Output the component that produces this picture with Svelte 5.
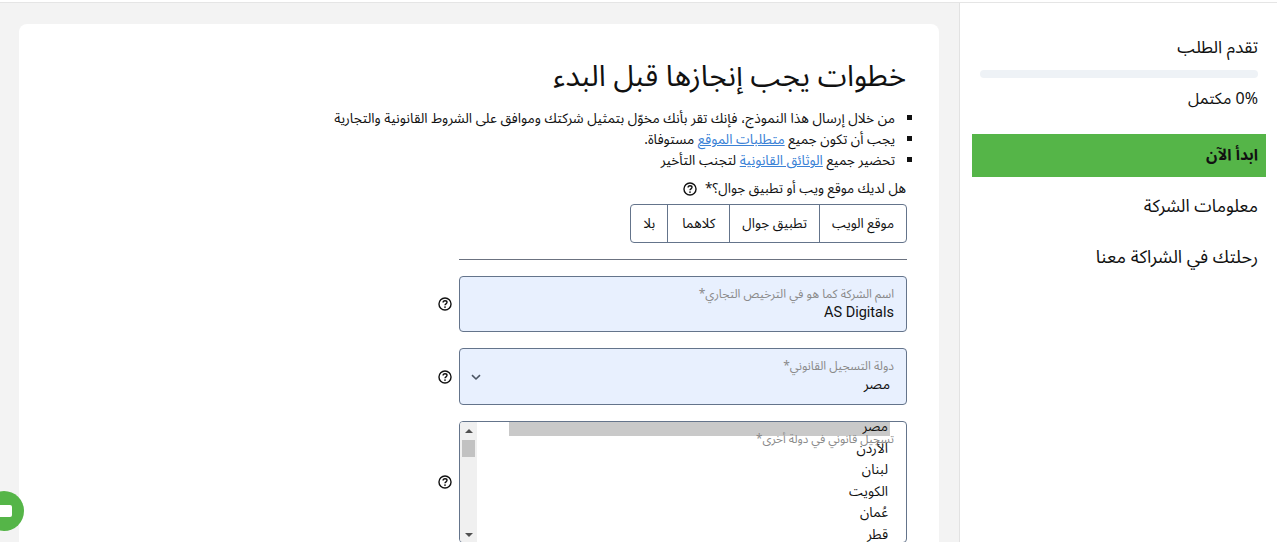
<script>
	const options = ['موقع الويب', 'تطبيق جوال', 'كلاهما', 'بلا'];
	const countries = ['مصر', 'الأردن', 'لبنان', 'الكويت', 'عُمان', 'قطر'];
</script>

{#snippet help()}
	<svg class="help" viewBox="0 0 16 16" width="14" height="14" aria-hidden="true">
		<circle cx="8" cy="8" r="6.9" fill="none" stroke="#111" stroke-width="1.6" />
		<path d="M5.8 6.3c0-1.3 1-2.1 2.3-2.1s2.2.8 2.2 1.9c0 1.7-2.3 1.7-2.3 3.4" fill="none" stroke="#111" stroke-width="1.6" />
		<circle cx="8" cy="11.5" r="1" fill="#111" />
	</svg>
{/snippet}

<div class="page" dir="rtl">
	<div class="topbar"></div>
	<div class="columns">
		<aside class="sidebar">
			<div class="progress">
				<p class="progress-title">تقدم الطلب</p>
				<div class="bar"></div>
				<p class="progress-value">0% مكتمل</p>
			</div>
			<nav class="steps">
				<div class="step active">ابدأ الآن</div>
				<div class="step">معلومات الشركة</div>
				<div class="step">رحلتك في الشراكة معنا</div>
			</nav>
		</aside>

		<main class="main">
			<section class="card">
				<h1>خطوات يجب إنجازها قبل البدء</h1>
				<ul class="notes">
					<li>من خلال إرسال هذا النموذج، فإنك تقر بأنك مخوّل بتمثيل شركتك وموافق على الشروط القانونية والتجارية</li>
					<li>يجب أن تكون جميع <a href="#req">متطلبات الموقع</a> مستوفاة.</li>
					<li>تحضير جميع <a href="#docs">الوثائق القانونية</a> لتجنب التأخير</li>
				</ul>

				<div class="question">
					<span>هل لديك موقع ويب أو تطبيق جوال؟*</span>
					{@render help()}
				</div>
				<div class="choices">
					{#each options as option}
						<button type="button">{option}</button>
					{/each}
				</div>
				<hr />

				<div class="row">
					<div class="field filled">
						<span class="label">اسم الشركة كما هو في الترخيص التجاري*</span>
						<span class="value latin">AS Digitals</span>
					</div>
					{@render help()}
				</div>

				<div class="row">
					<div class="field filled select">
						<span class="label">دولة التسجيل القانوني*</span>
						<span class="value inset">مصر</span>
						<svg class="chevron" viewBox="0 0 12 12" width="12" height="12" aria-hidden="true">
							<path d="M2 4.2 6 8l4-3.8" fill="none" stroke="#4b5563" stroke-width="1.6" />
						</svg>
					</div>
					{@render help()}
				</div>

				<div class="row">
					<div class="listbox">
						<div class="options">
							{#each countries as country, i}
								<div class="option" class:selected={i === 0}>{country}</div>
							{/each}
						</div>
						<span class="label floating">تسجيل قانوني في دولة أخرى*</span>
						<div class="scrollbar">
							<span class="arrow up"></span>
							<span class="thumb"></span>
							<span class="arrow down"></span>
						</div>
					</div>
					{@render help()}
				</div>
			</section>
		</main>
	</div>

	<div class="chat"><span></span></div>
</div>

<style>
	:global(body) {
		margin: 0;
		background: #fff;
	}

	.page {
		position: relative;
		display: flex;
		flex-direction: column;
		height: 542px;
		overflow: hidden;
		font-family: 'Noto Sans', 'Noto Sans Arabic', 'DejaVu Sans', sans-serif;
		color: #111;
	}

	.topbar {
		flex: none;
		box-sizing: border-box;
		height: 3px;
		border-bottom: 1px solid #e5e5e5;
		background: #fff;
	}

	.columns {
		display: flex;
		flex: 1;
		min-height: 0;
	}

	/* Sidebar */
	.sidebar {
		flex: 0 0 318px;
		box-sizing: border-box;
		padding: 32px 11px 0 12px;
		background: #fff;
		border-left: 1px solid #e2e2e2;
	}

	.progress {
		padding: 0 8px;
	}

	.progress-title {
		margin: 0;
		font-size: 17.3px;
		line-height: 24px;
	}

	.bar {
		height: 8px;
		margin-top: 11px;
		border-radius: 4px;
		background: #eef2f6;
	}

	.progress-value {
		margin: 8px 0 0;
		font-size: 16px;
		line-height: 24px;
	}

	.steps {
		margin-top: 24px;
	}

	.step {
		display: flex;
		align-items: center;
		height: 43px;
		padding: 0 8px;
		margin-bottom: 7.5px;
		font-size: 17.6px;
	}

	.step:last-child {
		font-size: 18px;
	}

	.step.active {
		margin-bottom: 8px;
		background: #55b548;
		font-weight: 700;
		font-size: 15.6px;
	}

	/* Main column */
	.main {
		flex: 1;
		box-sizing: border-box;
		padding: 21px 20px 0 19px;
		background: #f3f3f3;
	}

	.card {
		box-sizing: border-box;
		height: 600px;
		padding: 28px 32px 0 0;
		border-radius: 8px;
		background: #fff;
	}

	h1 {
		margin: 0 1px 0 0;
		font-size: 29.4px;
		font-weight: 400;
		line-height: 46px;
	}

	.notes {
		margin: 9px 0 0;
		padding: 0 12px 0 0;
		list-style: square;
		font-size: 13.75px;
		line-height: 21px;
	}

	a {
		color: #3b82d6;
	}

	.question {
		display: flex;
		align-items: center;
		gap: 8px;
		margin: 8px 1px 0 0;
		font-size: 13.5px;
		line-height: 21px;
	}

	.choices {
		display: inline-flex;
		height: 39px;
		margin-top: 5px;
		border: 1px solid #64748b;
		border-radius: 4px;
		box-sizing: border-box;
		vertical-align: top;
	}

	.choices button {
		padding: 0 12px;
		border: 0;
		border-left: 1px solid #64748b;
		background: none;
		font: inherit;
		font-size: 13.5px;
		color: #111;
	}

	.choices button:nth-child(3) {
		padding: 0 14px;
	}

	.choices button:last-child {
		border-left: 0;
	}

	hr {
		width: 448px;
		height: 1px;
		margin: 16px 0;
		border: 0;
		background: #6b7280;
	}

	.row {
		display: flex;
		align-items: center;
		gap: 7px;
		margin-bottom: 16px;
	}

	.field {
		position: relative;
		box-sizing: border-box;
		width: 448px;
		padding: 8px 12px 0;
		border: 1px solid #64748b;
		border-radius: 4px;
	}

	.filled {
		height: 56px;
		background: #e8f0fe;
	}

	.select {
		height: 57px;
	}

	.label {
		display: block;
		font-size: 12px;
		line-height: 17px;
		color: #8a8a8a;
	}

	.value {
		display: block;
		font-size: 14px;
		line-height: 20px;
	}

	.inset {
		padding: 0 4px 0 0;
	}

	.latin {
		direction: ltr;
		text-align: right;
		font-family: Roboto, sans-serif;
		font-size: 14.5px;
		line-height: 21px;
	}

	.chevron {
		position: absolute;
		left: 10px;
		top: 22px;
	}

	.listbox {
		position: relative;
		box-sizing: border-box;
		display: flex;
		width: 448px;
		height: 122px;
		border: 1px solid #64748b;
		border-radius: 4px;
		overflow: hidden;
	}

	.options {
		flex: 1;
		margin-top: -7px;
		font-size: 13.6px;
		line-height: 21.6px;
	}

	.option {
		height: 21.6px;
		padding-right: 18px;
	}

	.option.selected {
		margin: 0 16px 0 32px;
		padding-right: 2px;
		background: linear-gradient(#0000 7px, #c9c9c9 7px, #c9c9c9 21px, #0000 21px);
	}

	.floating {
		position: absolute;
		top: 8px;
		right: 12px;
		font-size: 11.7px;
	}

	.scrollbar {
		position: relative;
		flex: 0 0 17px;
		background: #f0f0f0;
	}

	.thumb {
		position: absolute;
		top: 18px;
		left: 2px;
		width: 13px;
		height: 17px;
		background: #c2c2c2;
	}

	.arrow {
		position: absolute;
		left: 5px;
		width: 0;
		height: 0;
		border-left: 4px solid transparent;
		border-right: 4px solid transparent;
	}

	.arrow.up {
		top: 7px;
		border-bottom: 4px solid #505050;
	}

	.arrow.down {
		top: 111px;
		border-top: 4px solid #505050;
	}

	.help {
		flex: none;
		order: 1;
	}

	/* Chat launcher, clipped by the viewport edge */
	.chat {
		position: absolute;
		left: -16px;
		top: 491px;
		display: flex;
		align-items: center;
		justify-content: center;
		width: 40px;
		height: 40px;
		border-radius: 50%;
		background: #55b548;
	}

	.chat span {
		width: 16px;
		height: 12px;
		border-radius: 2px;
		background: #fff;
	}
</style>
